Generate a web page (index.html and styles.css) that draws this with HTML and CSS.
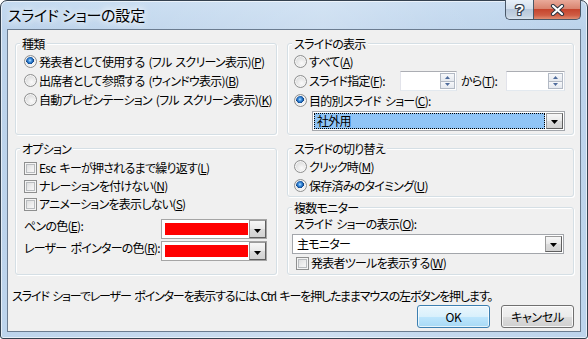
FILE: index.html
```html
<!DOCTYPE html>
<html lang="ja">
<head>
<meta charset="utf-8">
<title>スライド ショーの設定</title>
<link rel="stylesheet" href="styles.css">
</head>
<body>
<div class="window">
  <div class="titlebar">
    <div class="title">スライド ショーの設定</div>
    <div class="caption">
      <div class="cap-btn help"><span class="help-glyph">?</span></div>
      <div class="cap-btn close">
        <svg width="15" height="12" viewBox="0 0 15 12"><path d="M3 2 L12 10 M12 2 L3 10" stroke="#2b3440" stroke-width="4.2" stroke-linecap="round" fill="none"/><path d="M3 2 L12 10 M12 2 L3 10" stroke="#fff" stroke-width="2.2" stroke-linecap="round" fill="none"/></svg>
      </div>
    </div>
  </div>
  <div class="client">
    <div class="groups">
      <div class="group left g-type">
        <div class="legend">種類</div>
        <div class="row"><span class="radio checked"></span><span>発表者として使用する (フル スクリーン表示)(<u>P</u>)</span></div>
        <div class="row"><span class="radio"></span><span>出席者として参照する (ウィンドウ表示)(<u>B</u>)</span></div>
        <div class="row"><span class="radio"></span><span>自動プレゼンテーション (フル スクリーン表示)(<u>K</u>)</span></div>
      </div>
      <div class="group right g-show">
        <div class="legend">スライドの表示</div>
        <div class="row"><span class="radio"></span><span>すべて(<u>A</u>)</span></div>
        <div class="row spin-row">
          <div class="spin-label"><span class="radio"></span><span>スライド指定(<u>F</u>):</span></div>
          <div class="spin s1"><div class="spin-btns"><div class="spin-btn"><svg width="5" height="3" viewBox="0 0 5 3"><path d="M0 3 L2.5 0 L5 3 Z" fill="#4f6c9c"/></svg></div><div class="spin-btn"><svg width="5" height="3" viewBox="0 0 5 3"><path d="M0 0 L5 0 L2.5 3 Z" fill="#4f6c9c"/></svg></div></div></div>
          <span class="kara">から(<u>T</u>):</span>
          <div class="spin s2"><div class="spin-btns"><div class="spin-btn"><svg width="5" height="3" viewBox="0 0 5 3"><path d="M0 3 L2.5 0 L5 3 Z" fill="#4f6c9c"/></svg></div><div class="spin-btn"><svg width="5" height="3" viewBox="0 0 5 3"><path d="M0 0 L5 0 L2.5 3 Z" fill="#4f6c9c"/></svg></div></div></div>
        </div>
        <div class="row"><span class="radio checked"></span><span>目的別スライド ショー(<u>C</u>):</span></div>
        <div class="combo c-custom">
          <div class="combo-text selected">社外用</div>
          <div class="dd-btn"><svg width="7" height="4" viewBox="0 0 7 4"><path d="M0 0 H7 L3.5 4 Z" fill="#000"/></svg></div>
        </div>
      </div>
      <div class="group left g-opt">
        <div class="legend">オプション</div>
        <div class="row crow first"><span class="check"></span><span>Esc キーが押されるまで繰り返す(<u>L</u>)</span></div>
        <div class="row crow"><span class="check"></span><span>ナレーションを付けない(<u>N</u>)</span></div>
        <div class="row crow"><span class="check"></span><span>アニメーションを表示しない(<u>S</u>)</span></div>
        <div class="color-row first-color">
          <span class="color-label">ペンの色(<u>E</u>):</span>
          <div class="color-dd"><div class="swatch"></div><div class="dd-btn"><svg width="7" height="4" viewBox="0 0 7 4"><path d="M0 0 H7 L3.5 4 Z" fill="#000"/></svg></div></div>
        </div>
        <div class="color-row">
          <span class="color-label">レーザー ポインターの色(<u>R</u>):</span>
          <div class="color-dd"><div class="swatch"></div><div class="dd-btn"><svg width="7" height="4" viewBox="0 0 7 4"><path d="M0 0 H7 L3.5 4 Z" fill="#000"/></svg></div></div>
        </div>
      </div>
      <div class="col-right">
        <div class="group right g-adv">
          <div class="legend">スライドの切り替え</div>
          <div class="row"><span class="radio"></span><span>クリック時(<u>M</u>)</span></div>
          <div class="row"><span class="radio checked"></span><span>保存済みのタイミング(<u>U</u>)</span></div>
        </div>
        <div class="group right g-mon">
          <div class="legend">複数モニター</div>
          <div class="mon-label">スライド ショーの表示(<u>O</u>):</div>
          <div class="combo c-mon">
            <div class="combo-text">主モニター</div>
            <div class="dd-btn"><svg width="7" height="4" viewBox="0 0 7 4"><path d="M0 0 H7 L3.5 4 Z" fill="#000"/></svg></div>
          </div>
          <div class="row crow mon-check"><span class="check"></span><span>発表者ツールを表示する(<u>W</u>)</span></div>
        </div>
      </div>
    </div>
    <div class="hint">スライド ショーでレーザー ポインターを表示するには、Ctrl キーを押したままマウスの左ボタンを押します。</div>
    <div class="buttons">
      <div class="btn default">OK</div>
      <div class="btn">キャンセル</div>
    </div>
  </div>
</div>
</body>
</html>
```

FILE: styles.css
```css
* { box-sizing: border-box; }
html, body { margin: 0; padding: 0; }
body {
  width: 588px;
  height: 339px;
  overflow: hidden;
  background: #ffffff;
  font-family: "Noto Sans CJK JP", "Noto Sans", sans-serif;
  font-size: 12px;
  letter-spacing: -0.75px;
  word-spacing: 2px;
  color: #000;
  font-feature-settings: "palt" 1;
}
u { text-decoration: underline; text-underline-offset: 1px; }

.window {
  width: 588px;
  height: 339px;
  border: 1px solid #34414f;
  border-radius: 7px 7px 3px 3px;
  padding: 0 6px 6px;
  display: flex;
  flex-direction: column;
  background:
    linear-gradient(90deg, rgba(255,255,255,0) 0%, rgba(255,255,255,0.25) 55%, rgba(255,255,255,0.1) 75%, rgba(255,255,255,0) 100%),
    linear-gradient(180deg, #c4daf0 0px, #bcd3eb 28px, #bdd4ec 100%);
  box-shadow: inset 0 0 0 1px rgba(255,255,255,0.6);
}

.titlebar {
  height: 28px;
  display: flex;
  justify-content: space-between;
  align-items: flex-start;
}
.title {
  font-size: 15px;
  line-height: 18px;
  letter-spacing: -0.2px;
  word-spacing: 0;
  margin: 5px 0 0 1px;
  text-shadow: 0 0 6px #fff, 0 0 10px #fff;
}
.caption {
  display: flex;
  margin-top: -1px;
}
.cap-btn {
  height: 20px;
  border: 1px solid #4a5868;
  border-top: none;
  display: flex;
  align-items: center;
  justify-content: center;
}
.help {
  width: 28px;
  border-right: none;
  border-radius: 0 0 0 5px;
  background: linear-gradient(180deg, #e8f0f8 0%, #d3dfec 45%, #b7c7da 50%, #c5d3e2 85%, #d8e3ef 100%);
}
.help-glyph {
  font-family: "Liberation Sans", sans-serif;
  font-weight: bold;
  font-size: 15px;
  line-height: 15px;
  letter-spacing: 0;
  color: #fff;
  text-shadow: 1px 0 0 #3a4450, -1px 0 0 #3a4450, 0 1px 0 #3a4450, 0 -1px 0 #3a4450, 1px 1px 0 #3a4450, -1px -1px 0 #3a4450, 1px -1px 0 #3a4450, -1px 1px 0 #3a4450;
}
.close {
  width: 48px;
  border-radius: 0 0 5px 0;
  background: linear-gradient(180deg, #e9aa9a 0%, #d98470 45%, #c5452e 50%, #cf5c43 80%, #e08e73 100%);
}

.client {
  flex: 1;
  background: #f0f0f0;
  border: 1px solid #6b7c90;
  display: flex;
  flex-direction: column;
}

.groups {
  display: grid;
  grid-template-columns: 262px 287px;
  grid-template-rows: 92px 127px;
  column-gap: 10px;
  row-gap: 13px;
  margin: 13px 7px 0;
}
.col-right {
  display: flex;
  flex-direction: column;
  gap: 10px;
}

.group {
  border: 1px solid #d5dfe5;
  border-radius: 3px;
  box-shadow: inset 1px 1px 0 #fff, 1px 1px 0 #fff;
  white-space: nowrap;
}
.group.left { padding-left: 8px; }
.group.right { padding-left: 6px; }
.g-adv { height: 49px; }
.g-mon { height: 68px; }
.legend {
  width: fit-content;
  height: 15px;
  line-height: 15px;
  margin: -8px 0 1px -4px;
  padding: 0 2px;
  background: #f0f0f0;
}
.group.right .legend { margin-left: -2px; }

.row {
  display: flex;
  align-items: center;
  height: 19px;
  line-height: 16px;
}
.radio {
  flex: none;
  width: 13px;
  height: 13px;
  margin-right: 2px;
  border-radius: 50%;
  border: 1px solid #8e8f8f;
  background: radial-gradient(circle at 60% 65%, #fbfbfb 0, #e6e6e6 45%, #cfd1d2 100%);
  box-shadow: inset 0 0 0 1px #f6f6f6;
}
.radio.checked {
  background:
    radial-gradient(circle at 45% 40%, #c4e5ff 0, #4b9be6 1.4px, #1559a8 3.2px, #0d3f7e 3.7px, rgba(13,63,126,0) 4px),
    radial-gradient(circle at 60% 65%, #fbfbfb 0, #e6e6e6 45%, #cfd1d2 100%);
}
.check {
  flex: none;
  width: 13px;
  height: 13px;
  margin-right: 2px;
  border: 1px solid #8e8f8f;
  background: linear-gradient(135deg, #d6d7d8 0%, #f0f0f0 60%, #fbfbfb 100%);
  box-shadow: inset 0 0 0 1px #f4f4f4, inset 0 0 0 2px #b9bcbf;
}

/* slide range */
.spin-row { height: 20px; }
.spin-label {
  display: flex;
  align-items: center;
  width: 106px;
}
.spin {
  height: 20px;
  border: 1px solid;
  border-color: #abadb3 #dbdfe6 #e3e9ef #e2e3ea;
  background: #fff;
  padding: 1px;
  display: flex;
  justify-content: flex-end;
}
.spin.s1 { width: 57px; }
.spin.s2 { width: 59px; }
.kara { margin-left: 4px; width: 45px; }
.spin-btns {
  width: 15px;
  display: flex;
  flex-direction: column;
}
.spin-btn {
  flex: 1;
  border: 1px solid #b2b9c4;
  background: linear-gradient(180deg, #f7f8fa 0%, #e5e9ef 100%);
  display: flex;
  align-items: center;
  justify-content: center;
}
.spin-btn + .spin-btn { border-top: none; }
.spin-btn svg { display: block; }

.combo {
  display: flex;
  height: 20px;
  border: 1px solid #a3a6ab;
  background: #fff;
  padding: 1px;
}
.c-custom {
  width: 253px;
  margin: 1px 0 0 18px;
}
.combo-text {
  flex: 1;
  line-height: 16px;
  padding-left: 3px;
}
.combo-text.selected {
  background: #8fc4f6;
  outline: 1px dotted #000;
  outline-offset: -1px;
}
.dd-btn {
  flex: none;
  width: 17px;
  margin-left: 1px;
  border: 1px solid;
  border-color: #9a9a9a #5f5f5f #5f5f5f #9a9a9a;
  background: linear-gradient(180deg, #f7f7f7 0%, #e9e9e9 50%, #dcdcdc 51%, #d2d2d2 100%);
  display: flex;
  align-items: flex-end;
  justify-content: center;
  padding-bottom: 4px;
}
.dd-btn svg { display: block; }

/* options */
.crow { height: 18px; }
.crow.first { margin-top: 3px; }
.color-row {
  display: flex;
  align-items: flex-start;
  height: 20px;
  margin-top: 2px;
  padding-right: 9px;
}
.color-row.first-color { margin-top: 6px; }
.color-label {
  flex: 1;
  line-height: 14px;
}
.color-dd {
  width: 106px;
  height: 20px;
  border: 1px solid #a5a5a5;
  background: #fff;
  display: flex;
  padding: 3px 0 3px 3px;
}
.swatch {
  flex: 1;
  background: #ff0000;
}
.color-dd .dd-btn {
  margin: -3px 0 -3px 1px;
}

/* monitors */
.mon-label {
  line-height: 16px;
  height: 16px;
}
.c-mon {
  width: 272px;
  margin: 2px 0 0 -2px;
}
.mon-check { margin-left: 2px; }

.hint {
  line-height: 16px;
  margin: 13px 0 0 4px;
  white-space: nowrap;
  letter-spacing: -1.15px;
}
.buttons {
  display: flex;
  justify-content: flex-end;
  gap: 11px;
  margin: 1px 6px 0 0;
}
.btn {
  width: 73px;
  height: 23px;
  border: 1px solid #707070;
  border-radius: 3px;
  background: linear-gradient(180deg, #f2f2f2 0%, #ebebeb 50%, #dddddd 51%, #cfcfcf 100%);
  box-shadow: inset 0 0 0 1px rgba(255,255,255,0.8);
  display: flex;
  align-items: center;
  justify-content: center;
  line-height: 16px;
  letter-spacing: -0.3px;
}
.btn.default {
  border-color: #3c7fb1;
  background: linear-gradient(180deg, #eaf6fd 0%, #d9f0fc 50%, #bee6fd 51%, #a7d9f5 100%);
  box-shadow: inset 0 0 0 1px rgba(255,255,255,0.7);
}
```
